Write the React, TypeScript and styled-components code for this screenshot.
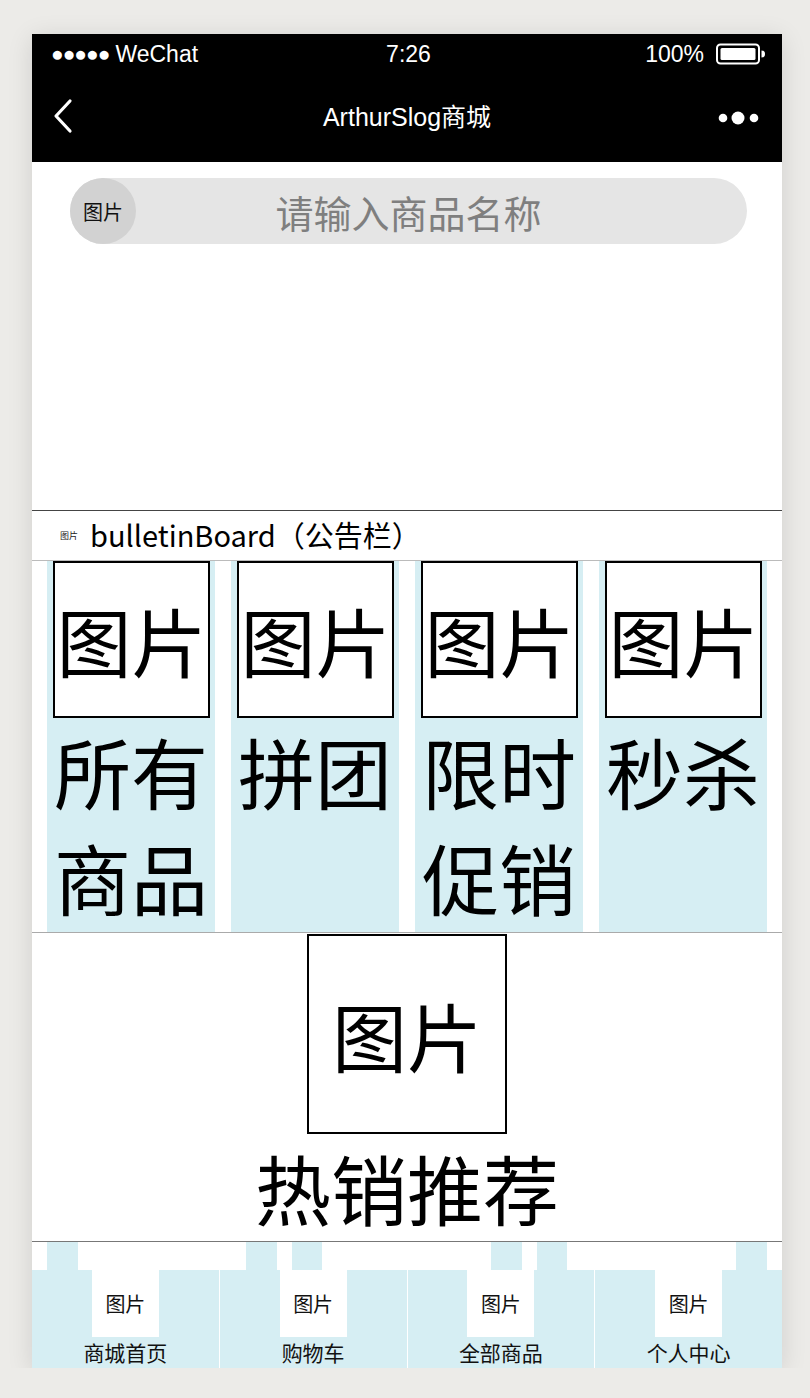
import React from "react";
import styled, { createGlobalStyle } from "styled-components";

const Global = createGlobalStyle`
  html, body { margin: 0; padding: 0; background: #ecebe8; }
  body { font-family: "Noto Sans CJK SC", "Noto Sans", sans-serif; }
  * { box-sizing: border-box; }
`;

const Phone = styled.div`
  margin: 34px 0 0 32px;
  width: 750px;
  background: #fff;
  box-shadow: 0 4px 24px rgba(0, 0, 0, 0.12);
  display: flex;
  flex-direction: column;
`;

const StatusBar = styled.div`
  height: 40px;
  background: #000;
  color: #fff;
  display: grid;
  grid-template-columns: 1fr auto 1fr;
  align-items: center;
  padding: 0 16px 0 19px;
  font-family: "Liberation Sans", Arial, sans-serif;
  font-size: 23px;
`;

const StatusLeft = styled.div`
  display: flex;
  align-items: center;
  gap: 6px;
`;

const Signal = styled.span`
  font-size: 21px;
  letter-spacing: -1px;
`;

const StatusRight = styled.div`
  display: flex;
  justify-content: flex-end;
  align-items: center;
  gap: 12px;
`;

const NavBar = styled.div`
  height: 88px;
  background: #000;
  color: #fff;
  display: grid;
  grid-template-columns: 1fr auto 1fr;
  align-items: center;
  padding: 0 20px 0 20px;
`;

const NavTitle = styled.div`
  font-family: "Liberation Sans", "Noto Sans CJK SC", sans-serif;
  font-size: 25px;
  margin-top: -6px;
`;

const NavRight = styled.div`
  display: flex;
  justify-content: flex-end;
`;

const Top = styled.div`
  height: 348px;
  padding: 16px 35px 0 38px;
`;

const SearchPill = styled.div`
  height: 66px;
  border-radius: 33px;
  background: #e5e5e5;
  display: flex;
  align-items: center;
`;

const SearchIcon = styled.div`
  width: 66px;
  height: 66px;
  border-radius: 50%;
  background: #d2d2d2;
  display: flex;
  align-items: center;
  justify-content: center;
  font-size: 20px;
  color: #111;
  flex-shrink: 0;
`;

const Placeholder = styled.div`
  flex: 1;
  text-align: center;
  font-size: 38px;
  color: #7f7f7f;
  padding-right: 66px;
`;

const Bulletin = styled.div`
  height: 51px;
  border-top: 1px solid #444;
  border-bottom: 1px solid #bbb;
  display: flex;
  align-items: center;
  padding-left: 28px;
  gap: 12px;
`;

const TinyPic = styled.span`
  font-size: 9px;
  color: #222;
`;

const BulletinText = styled.span`
  font-size: 29px;
  color: #000;
  margin-top: -3px;
`;

const Grid = styled.div`
  height: 371px;
  display: flex;
  gap: 16px;
  padding-left: 15px;
`;

const Item = styled.div`
  width: 168px;
  background: #d6eef3;
  display: flex;
  flex-direction: column;
  align-items: flex-start;
`;

const PicBox = styled.div<{ $size: number; $font: number }>`
  width: ${(p) => p.$size}px;
  height: ${(p) => p.$size}px;
  border: 2px solid #000;
  background: #fff;
  display: flex;
  align-items: center;
  justify-content: center;
  font-size: ${(p) => p.$font}px;
  color: #000;
  flex-shrink: 0;
`;

const ItemPic = styled(PicBox)`
  margin-left: 6px;
`;

const BigText = styled.div`
  font-size: 77px;
  line-height: 106px;
  color: #000;
  width: 100%;
  text-align: center;
  word-break: break-all;
`;

const Hot = styled.div`
  border-top: 1px solid #aaa;
  border-bottom: 1px solid #777;
  display: flex;
  flex-direction: column;
  align-items: center;
  padding-top: 1px;
`;

const HotText = styled.div`
  font-size: 76px;
  line-height: 107px;
  color: #000;
`;

const Strip = styled.div`
  height: 28px;
  display: flex;
`;

const StripCell = styled.div<{ $blue: boolean }>`
  height: 100%;
  flex-shrink: 0;
  background: ${(p) => (p.$blue ? "#d6eef3" : "#fff")};
`;

const TabBar = styled.div`
  height: 98px;
  display: grid;
  grid-template-columns: repeat(4, 1fr);
  gap: 1px;
  background: #fff;
`;

const Tab = styled.div`
  background: #d6eef3;
  display: flex;
  flex-direction: column;
  align-items: center;
`;

const TabIcon = styled.div`
  width: 67px;
  height: 67px;
  background: #fff;
  display: flex;
  align-items: center;
  justify-content: center;
  font-size: 20px;
  color: #111;
`;

const TabLabel = styled.div`
  font-size: 21px;
  line-height: 31px;
  color: #111;
`;

const items = ["所有商品", "拼团", "限时促销", "秒杀"];

const stripCells: [number, boolean][] = [
  [15, false],
  [31, true],
  [168, false],
  [31, true],
  [15, false],
  [30, true],
  [169, false],
  [31, true],
  [15, false],
  [30, true],
  [169, false],
  [31, true],
];

const tabs = ["商城首页", "购物车", "全部商品", "个人中心"];

const Battery = () => (
  <svg width="50" height="22" viewBox="0 0 50 22">
    <rect x="1" y="1.5" width="42" height="19" rx="3.5" fill="none" stroke="#fff" strokeWidth="2" />
    <rect x="4.5" y="5" width="35" height="12" rx="1.5" fill="#fff" />
    <path d="M45.5 7.5 a3.5 3.5 0 0 1 0 7 z" fill="#fff" />
  </svg>
);

const Back = () => (
  <svg width="22" height="36" viewBox="0 0 22 36">
    <polyline points="18,3 4,18 18,33" fill="none" stroke="#fff" strokeWidth="3.2" strokeLinecap="round" strokeLinejoin="round" />
  </svg>
);

const More = () => (
  <svg width="44" height="16" viewBox="0 0 44 16">
    <circle cx="5" cy="8" r="4.3" fill="#fff" />
    <circle cx="20" cy="8" r="6.5" fill="#fff" />
    <circle cx="36" cy="8" r="4.3" fill="#fff" />
  </svg>
);

export default function App() {
  return (
    <>
      <Global />
      <Phone>
        <StatusBar>
          <StatusLeft>
            <Signal>●●●●●</Signal>
            <span>WeChat</span>
          </StatusLeft>
          <span>7:26</span>
          <StatusRight>
            <span>100%</span>
            <Battery />
          </StatusRight>
        </StatusBar>
        <NavBar>
          <div>
            <Back />
          </div>
          <NavTitle>ArthurSlog商城</NavTitle>
          <NavRight>
            <More />
          </NavRight>
        </NavBar>
        <Top>
          <SearchPill>
            <SearchIcon>图片</SearchIcon>
            <Placeholder>请输入商品名称</Placeholder>
          </SearchPill>
        </Top>
        <Bulletin>
          <TinyPic>图片</TinyPic>
          <BulletinText>bulletinBoard（公告栏）</BulletinText>
        </Bulletin>
        <Grid>
          {items.map((t) => (
            <Item key={t}>
              <ItemPic $size={157} $font={75}>图片</ItemPic>
              <BigText>{t}</BigText>
            </Item>
          ))}
        </Grid>
        <Hot>
          <PicBox $size={200} $font={75}>图片</PicBox>
          <HotText>热销推荐</HotText>
        </Hot>
        <Strip>
          {stripCells.map(([w, b], i) => (
            <StripCell key={i} $blue={b} style={{ width: w }} />
          ))}
        </Strip>
        <TabBar>
          {tabs.map((t) => (
            <Tab key={t}>
              <TabIcon>图片</TabIcon>
              <TabLabel>{t}</TabLabel>
            </Tab>
          ))}
        </TabBar>
      </Phone>
    </>
  );
}
